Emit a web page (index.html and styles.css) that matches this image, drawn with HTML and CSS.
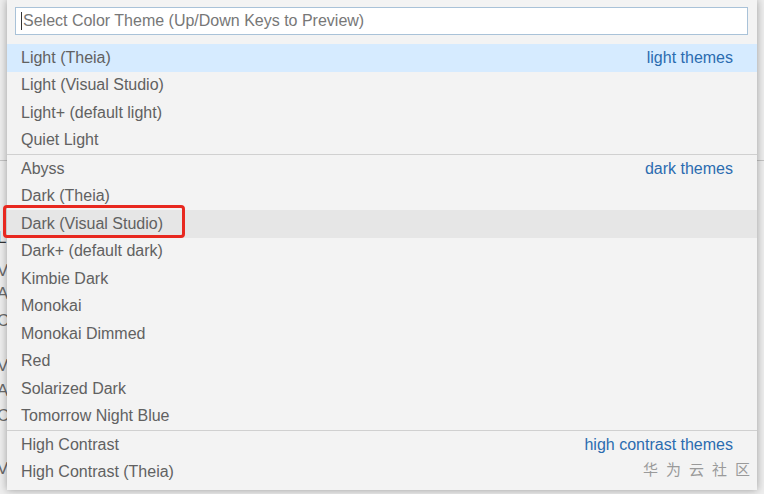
FILE: index.html
```html
<!DOCTYPE html>
<html lang="en">
<head>
<meta charset="utf-8">
<title>Select Color Theme</title>
<link rel="stylesheet" href="styles.css">
</head>
<body>
<div class="backdrop">
  <div class="bg-line bg-line-top"></div>
  <div class="bg-frag f1">L</div>
  <div class="bg-frag f2">V</div>
  <div class="bg-frag f3">A</div>
  <div class="bg-frag f4">C</div>
  <div class="bg-frag f5">V</div>
  <div class="bg-frag f6">A</div>
  <div class="bg-frag f7">C</div>
  <div class="bg-frag f8">V</div>
</div>

<div class="quick-open">
  <div class="input-wrap">
    <div class="input"><span class="caret"></span><span class="placeholder">Select Color Theme (Up/Down Keys to Preview)</span></div>
  </div>
  <ul class="list">
    <li class="row selected"><span class="label">Light (Theia)</span><span class="group">light themes</span></li>
    <li class="row"><span class="label">Light (Visual Studio)</span></li>
    <li class="row"><span class="label">Light+ (default light)</span></li>
    <li class="row"><span class="label">Quiet Light</span></li>
    <li class="row sep"><span class="label">Abyss</span><span class="group">dark themes</span></li>
    <li class="row"><span class="label">Dark (Theia)</span></li>
    <li class="row hover"><span class="label">Dark (Visual Studio)</span><span class="mark"></span></li>
    <li class="row"><span class="label">Dark+ (default dark)</span></li>
    <li class="row"><span class="label">Kimbie Dark</span></li>
    <li class="row"><span class="label">Monokai</span></li>
    <li class="row"><span class="label">Monokai Dimmed</span></li>
    <li class="row"><span class="label">Red</span></li>
    <li class="row"><span class="label">Solarized Dark</span></li>
    <li class="row"><span class="label">Tomorrow Night Blue</span></li>
    <li class="row sep"><span class="label">High Contrast</span><span class="group">high contrast themes</span></li>
    <li class="row"><span class="label">High Contrast (Theia)</span></li>
  </ul>
  <div class="watermark">华为云社区</div>
</div>
</body>
</html>
```

FILE: styles.css
```css
html, body {
  margin: 0;
  padding: 0;
}
body {
  width: 764px;
  height: 494px;
  overflow: hidden;
  position: relative;
  background: #ececec;
  font-family: "Liberation Sans", Arial, sans-serif;
}

.backdrop {
  position: relative;
  width: 764px;
  height: 494px;
  background: #eeeeee;
}
.bg-line {
  position: absolute;
  left: 0;
  right: 0;
  height: 1px;
  background: #c4c4c4;
}
.bg-line-top { top: 160px; }
.bg-frag {
  position: absolute;
  left: -3px;
  font-size: 17px;
  color: #6b6b6b;
}
.f1 { top: 228px; color: #333; }
.f2 { top: 261px; }
.f3 { top: 284px; }
.f4 { top: 311px; }
.f5 { top: 356px; }
.f6 { top: 381px; }
.f7 { top: 406px; }
.f8 { top: 459px; }

.quick-open {
  position: absolute;
  left: 7px;
  top: 0;
  width: 750px;
  height: 490px;
  background: #f3f3f3;
  box-shadow: 0 0 8px rgba(0, 0, 0, 0.35);
}

.input-wrap {
  padding: 7px 9px 9px 8px;
}
.input {
  box-sizing: border-box;
  height: 28px;
  background: #ffffff;
  border: 1px solid #a9c2d8;
  display: flex;
  align-items: center;
  padding-left: 5px;
  font-size: 16px;
  color: #777777;
}
.caret {
  width: 1px;
  height: 18px;
  background: #333;
  margin-right: 1px;
}

.list {
  list-style: none;
  margin: 0;
  padding: 0;
}
.row {
  position: relative;
  box-sizing: border-box;
  height: 27.5px;
  display: flex;
  align-items: center;
  justify-content: space-between;
  padding: 0 24px 0 14px;
  font-size: 16px;
  color: #616161;
}
.row.sep {
  border-top: 1px solid #d0d0d0;
  height: 28.5px;
}
.row.selected {
  background: #d6ebff;
}
.row.hover {
  background: #e6e6e6;
}
.group {
  color: #2b6cb0;
}
.mark {
  position: absolute;
  left: -4px;
  top: -5px;
  width: 182px;
  height: 33px;
  box-sizing: border-box;
  border: 3px solid #e8281f;
  border-radius: 4px;
}

.watermark {
  position: absolute;
  right: -1px;
  top: 458px;
  font-family: "Noto Sans CJK SC", sans-serif;
  font-size: 15px;
  letter-spacing: 8px;
  color: #9a9a9a;
}
```
